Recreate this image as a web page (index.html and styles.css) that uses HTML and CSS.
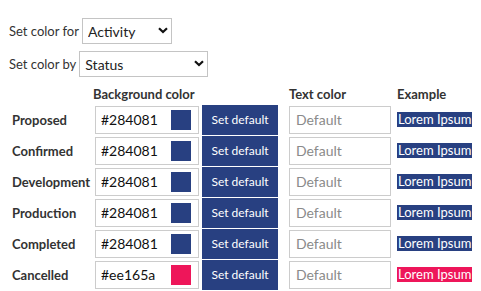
FILE: index.html
```html
<!DOCTYPE html>
<html lang="en">
<head>
  <meta charset="UTF-8" />
  <title>Color settings</title>
  <link rel="stylesheet" href="styles.css">
</head>
<body>
  <div class="settings">
    <div class="setting-row">
      <label for="colorFor">Set color for</label>
      <div class="select-wrap">
        <select id="colorFor" class="select-for">
          <option>Activity</option>
        </select>
        <svg class="chevron" width="10" height="7" viewBox="0 0 10 7"><polyline points="1,1.2 5,5 9,1.2" fill="none" stroke="#111" stroke-width="2.2"/></svg>
      </div>
    </div>
    <div class="setting-row">
      <label for="colorBy">Set color by</label>
      <div class="select-wrap">
        <select id="colorBy" class="select-by">
          <option>Status</option>
        </select>
        <svg class="chevron" width="10" height="7" viewBox="0 0 10 7"><polyline points="1,1.2 5,5 9,1.2" fill="none" stroke="#111" stroke-width="2.2"/></svg>
      </div>
    </div>
  </div>

  <div class="color-table">
    <div class="head"></div>
    <div class="head">Background color</div>
    <div class="head"></div>
    <div class="head">Text color</div>
    <div class="head">Example</div>

    <div class="cell name">Proposed</div>
    <div class="cell"><div class="color-field"><input value="#284081"><span class="swatch blue"></span></div></div>
    <div class="cell"><button>Set default</button></div>
    <div class="cell"><input class="text-field" placeholder="Default"></div>
    <div class="cell"><span class="example blue">Lorem Ipsum</span></div>

    <div class="cell name">Confirmed</div>
    <div class="cell"><div class="color-field"><input value="#284081"><span class="swatch blue"></span></div></div>
    <div class="cell"><button>Set default</button></div>
    <div class="cell"><input class="text-field" placeholder="Default"></div>
    <div class="cell"><span class="example blue">Lorem Ipsum</span></div>

    <div class="cell name">Development</div>
    <div class="cell"><div class="color-field"><input value="#284081"><span class="swatch blue"></span></div></div>
    <div class="cell"><button>Set default</button></div>
    <div class="cell"><input class="text-field" placeholder="Default"></div>
    <div class="cell"><span class="example blue">Lorem Ipsum</span></div>

    <div class="cell name">Production</div>
    <div class="cell"><div class="color-field"><input value="#284081"><span class="swatch blue"></span></div></div>
    <div class="cell"><button>Set default</button></div>
    <div class="cell"><input class="text-field" placeholder="Default"></div>
    <div class="cell"><span class="example blue">Lorem Ipsum</span></div>

    <div class="cell name">Completed</div>
    <div class="cell"><div class="color-field"><input value="#284081"><span class="swatch blue"></span></div></div>
    <div class="cell"><button>Set default</button></div>
    <div class="cell"><input class="text-field" placeholder="Default"></div>
    <div class="cell"><span class="example blue">Lorem Ipsum</span></div>

    <div class="cell name">Cancelled</div>
    <div class="cell"><div class="color-field"><input value="#ee165a"><span class="swatch pink"></span></div></div>
    <div class="cell"><button>Set default</button></div>
    <div class="cell"><input class="text-field" placeholder="Default"></div>
    <div class="cell"><span class="example pink">Lorem Ipsum</span></div>
  </div>
</body>
</html>
```

FILE: styles.css
```css
body {
  margin: 8px;
  font-family: Lato, 'Open Sans', sans-serif;
  font-size: 13px;
  color: #333;
  background: #fff;
}

input, select, button {
  font-family: Lato, 'Open Sans', sans-serif;
  box-sizing: border-box;
}

.settings {
  padding-top: 10px;
  display: flex;
  flex-direction: column;
  gap: 7px;
}

.setting-row {
  display: flex;
  align-items: center;
  height: 26px;
}

.setting-row label {
  font-size: 13px;
  margin-left: 1px;
  margin-right: 3px;
}

.select-wrap {
  position: relative;
  display: flex;
}

select {
  appearance: none;
  height: 26px;
  border: 1px solid #c4c4c4;
  border-radius: 0;
  background: #fff;
  color: #222;
  font-size: 14px;
  padding: 0 5px;
  outline: none;
}

.select-for { width: 90px; }
.select-by { width: 129px; }

.chevron {
  position: absolute;
  right: 4px;
  top: 9px;
  pointer-events: none;
}

.color-table {
  display: grid;
  grid-template-columns: 83px 107px 87px 108px auto;
  grid-template-rows: 19px repeat(6, 31px);
  margin: 8px 0 0 4px;
}

.head {
  font-size: 13px;
  font-weight: 700;
  line-height: 18px;
  color: #333;
}

.head:nth-child(2) {
  margin-left: -2px;
}

.cell {
  display: flex;
  align-items: center;
}

.name {
  font-size: 13px;
  font-weight: 700;
}

.color-field {
  display: flex;
  align-items: center;
  width: 104px;
  height: 28px;
  box-sizing: border-box;
  border: 1px solid #ccc;
  background: #fff;
}

.color-field input {
  border: none;
  outline: none;
  width: 70px;
  padding: 0 0 0 5px;
  font-size: 14px;
  color: #111;
  background: transparent;
}

.swatch {
  width: 20px;
  height: 20px;
  margin-left: auto;
  margin-right: 7px;
}

.blue { background: #284081; }
.pink { background: #ee165a; }

button {
  width: 76px;
  height: 30px;
  border: none;
  background: #284081;
  color: #fff;
  font-size: 12px;
  padding: 0;
  cursor: pointer;
}

.text-field {
  width: 102px;
  height: 28px;
  border: 1px solid #ccc;
  padding: 0 6px;
  font-size: 14px;
  outline: none;
}

.text-field::placeholder {
  color: #8a8a8a;
}

.example {
  color: #fff;
  font-size: 13px;
  line-height: 15px;
  padding: 0 1px;
  white-space: nowrap;
}
```
